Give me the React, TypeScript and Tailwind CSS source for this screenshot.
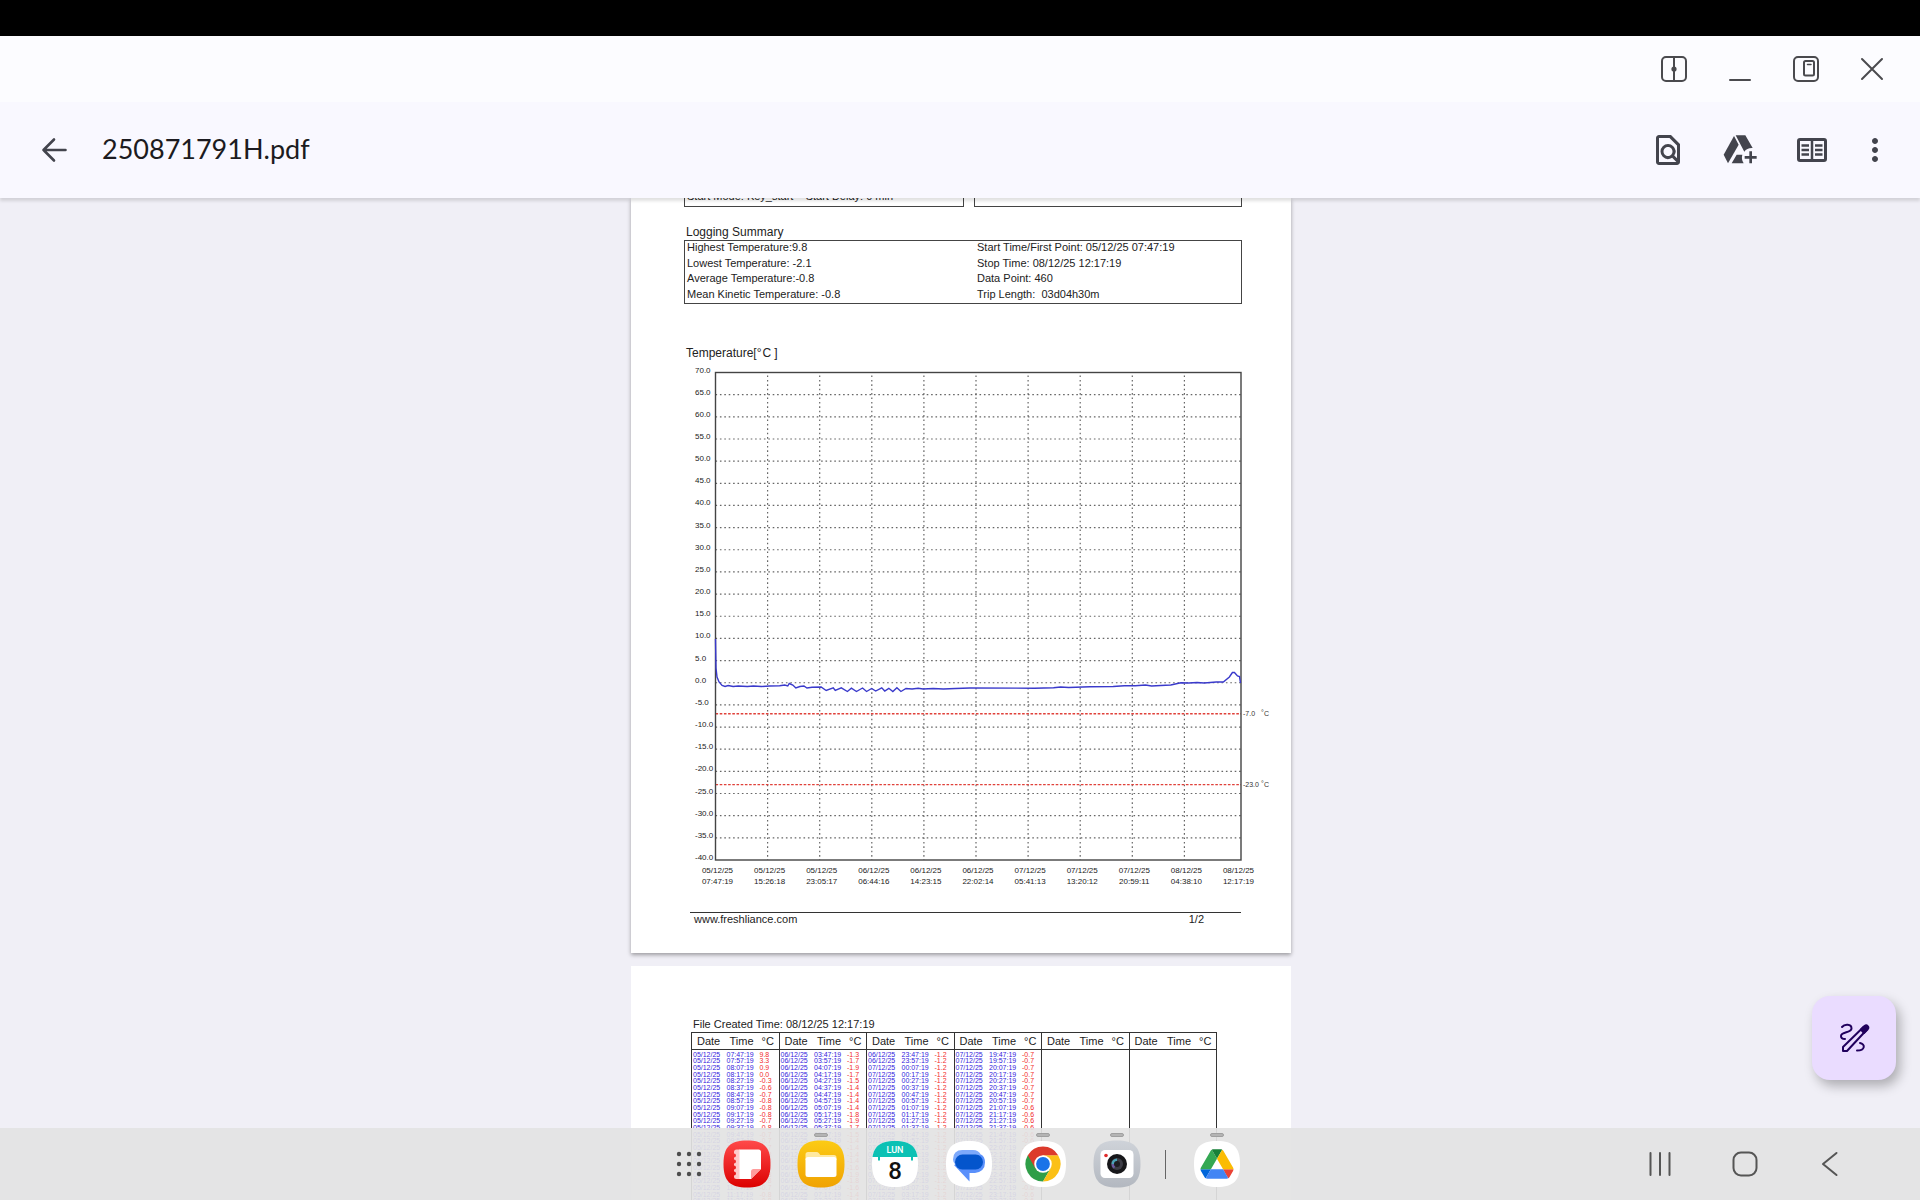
import React from "react";
import { MdOutlineFindInPage, MdMoreVert } from "react-icons/md";

/* ---------- window and app bars ---------- */

function WindowButton({ label, children }: { label: string; children: React.ReactNode }) {
  return (
    <button type="button" aria-label={label} className="flex h-full w-[66px] items-center justify-center">
      <svg width="28" height="28" viewBox="0 0 28 28" fill="none" stroke="#4a4a4e" strokeWidth="2" strokeLinecap="round">
        {children}
      </svg>
    </button>
  );
}

function WindowBar() {
  return (
    <div className="flex h-[66px] justify-end bg-[#fcfcff] pr-[15px]">
      <WindowButton label="Split window">
        <rect x="2" y="2" width="24" height="24" rx="4" />
        <path d="M14 2v24" />
        <circle cx="14" cy="14" r="2.6" fill="#4a4a4e" stroke="none" />
      </WindowButton>
      <WindowButton label="Minimize">
        <path d="M4 25h20" />
      </WindowButton>
      <WindowButton label="Pop-up view">
        <rect x="2" y="2" width="24" height="24" rx="4" />
        <rect x="12" y="6" width="10" height="14.500" rx="1.5" />
        <path d="M15.5 9.5h3.5" strokeWidth="1.5" />
      </WindowButton>
      <WindowButton label="Close">
        <path d="M4 4l20 20M24 4L4 24" />
      </WindowButton>
    </div>
  );
}

function AppBar() {
  return (
    <header className="relative z-10 flex h-24 items-center bg-[#f9f8ff] pl-9 pr-[27px] text-[#43444d] shadow-[0_3px_3px_rgba(0,0,0,0.12)]">
      <button type="button" aria-label="Back" className="size-9">
        <svg width="36" height="36" viewBox="0 0 36 36" fill="none" stroke="currentColor" strokeWidth="2.6" strokeLinecap="round" strokeLinejoin="round">
          <path d="M29.5 18H7.5M18 7.5L7.5 18L18 28.5" />
        </svg>
      </button>
      <h1 className="ml-[30px] pb-[2px] font-[Lato,sans-serif] text-[27px] leading-9 text-[#1c1b20]">250871791H.pdf</h1>
      <div className="ml-auto flex items-center">
        <button type="button" aria-label="Find in file" className="flex w-[72px] justify-center">
          <MdOutlineFindInPage size={36} />
        </button>
        <button type="button" aria-label="Add to Drive" className="flex w-[72px] justify-center">
          <svg width="36" height="36" viewBox="0 0 108 108" fill="currentColor">
            <path d="M36 12L50 38L18 94L5 68Z" />
            <path d="M41 10H70L92 48Q75 47 67 59Z" />
            <path d="M29 94L44 68H61Q57 82 65 94Z" />
            <path d="M82 58h8v14h14v8H90v14h-8V80H68v-8h14Z" />
          </svg>
        </button>
        <button type="button" aria-label="Reading view" className="flex w-[72px] justify-center">
          <svg width="36" height="36" viewBox="0 0 36 36" fill="none" stroke="currentColor">
            <rect x="4.5" y="7.5" width="27" height="21" rx="1.5" strokeWidth="3" />
            <path d="M18 7v22" strokeWidth="2.5" />
            <path d="M7.5 13.5h7.5M7.5 18h7.5M7.5 22.5h7.5M21 13.5h7.5M21 18h7.5M21 22.5h7.5" strokeWidth="2.4" />
          </svg>
        </button>
        <button type="button" aria-label="More options" className="ml-[9px] flex w-9 justify-center">
          <MdMoreVert size={36} />
        </button>
      </div>
    </header>
  );
}

/* ---------- page 1 ---------- */

const AXIS = ["05/12/25 07:47:19", "05/12/25 15:26:18", "05/12/25 23:05:17", "06/12/25 06:44:16", "06/12/25 14:23:15", "06/12/25 22:02:14", "07/12/25 05:41:13", "07/12/25 13:20:12", "07/12/25 20:59:11", "08/12/25 04:38:10", "08/12/25 12:17:19"];

const LEFT = 84.5;
const RIGHT = 610;
const TOP = 11.5;
const BOTTOM = 499;
const yOf = (t: number) => TOP + ((70 - t) * (BOTTOM - TOP)) / 110;
const xOf = (i: number) => LEFT + i * 52.1;

const CURVE =
  "84.5,278 85,307 86,316 88,321 91,324.5 94,325.5 97,324.5 102,325.5 107,325 116,325.5 122,325 130,325.5 138,325 148,324.8 153,324 156,325 157.5,322.5 161,324 164,327 168,325.5 172,325 175,327 180,326.3 189,326 194,329.5 201,326.8 203,329.5 209,326.8 215,330.5 219,327.2 224,330.5 230,327 234,330.5 239,327.5 243,330 249,326.8 252,330 256,327.3 260,330.5 264,326.8 268,330.5 273,327.5 279,328 285,327.3 290,328 300,327.5 310,328 322,327.5 336,327 400,327.2 419,326.8 426,326 434,326.5 455,325.8 478,325.5 489,324.8 500,324.8 510,324 516,325 525,324.5 535,324 545,321.8 553,322 561,321.5 568,322 580,321 587,321 593,316 596,311.5 598,311.5 601,315 603,315.5 604,322";

function Chart() {
  const temps = Array.from({ length: 23 }, (_, i) => 70 - i * 5);
  return (
    <svg width="660" height="529" viewBox="0 0 660 529" className="block font-['Liberation_Sans',Arial,sans-serif]" role="img" aria-label="Temperature chart">
      <g stroke="#666" strokeWidth="1.2" strokeDasharray="1.6 2.8">
        {temps.slice(1, -1).map((t) => (
          <path key={t} d={`M${LEFT} ${yOf(t)}H${RIGHT}`} />
        ))}
        {AXIS.slice(1, -1).map((a, i) => (
          <path key={a} d={`M${xOf(i + 1)} ${TOP + 3}V${BOTTOM}`} />
        ))}
      </g>
      <g stroke="#e0413a" strokeWidth="1.4" strokeDasharray="2.6 1.6">
        <path d={`M${LEFT} ${yOf(-7)}H${RIGHT}`} />
        <path d={`M${LEFT} ${yOf(-23)}H${RIGHT}`} />
      </g>
      <rect x={LEFT} y={TOP} width={RIGHT - LEFT} height={BOTTOM - TOP} fill="none" stroke="#444" strokeWidth="1.4" />
      <polyline points={CURVE} transform={`translate(${LEFT} 0) scale(${525 / 519.5} 1) translate(${-LEFT} 0)`} fill="none" stroke="#3a3acb" strokeWidth="1.4" />
      <g fontSize="8" fill="#222">
        {temps.map((t) => (
          <text key={t} x="64" y={yOf(t)}>
            {t.toFixed(1)}
          </text>
        ))}
      </g>
      <g fontSize="8" fill="#222" textAnchor="middle">
        {AXIS.map((a, i) => {
          const [d, h] = a.split(" ");
          return (
            <g key={a}>
              <text x={xOf(i) + 2} y="512">{d}</text>
              <text x={xOf(i) + 2} y="523">{h}</text>
            </g>
          );
        })}
      </g>
      <g fontSize="7" fill="#333">
        {[-7, -23].map((t) => (
          <g key={t}>
            <text x="612" y={yOf(t) + 2}>{t.toFixed(1)}</text>
            <text x="630" y={yOf(t) + 1}>°</text>
            <text x="633" y={yOf(t) + 2}>C</text>
          </g>
        ))}
      </g>
    </svg>
  );
}

function PageOne() {
  return (
    <section className="h-[755px] w-[660px] bg-white text-[#222] shadow-[0_2px_4px_rgba(0,0,0,0.35)]">
      <div className="ml-[53px] flex h-[9px] w-[558px] justify-between overflow-hidden text-[11px] leading-[15px]">
        <div className="flex w-[280px] items-end whitespace-pre border-x border-b border-[#444] pb-[2px] pl-[2px]">
          Start Mode: Key_start{"    "}Start Delay: 0 min
        </div>
        <div className="w-[268px] border-x border-b border-[#444]" />
      </div>
      <h2 className="ml-[55px] mt-[17px] text-[12px] leading-4">Logging Summary</h2>
      <div className="ml-[53px] grid h-16 w-[558px] grid-cols-[290px_1fr] grid-rows-4 whitespace-pre border border-[#444] pl-[2px] text-[11px] leading-[13px]">
        <p>Highest Temperature:9.8</p>
        <p>Start Time/First Point: 05/12/25 07:47:19</p>
        <p>Lowest Temperature: -2.1</p>
        <p>Stop Time: 08/12/25 12:17:19</p>
        <p>Average Temperature:-0.8</p>
        <p>Data Point: 460</p>
        <p>Mean Kinetic Temperature: -0.8</p>
        <p>Trip Length:  03d04h30m</p>
      </div>
      <h2 className="ml-[55px] mt-[41px] text-[12px] leading-4">
        Temperature[<span className="mr-px">°</span>C<span className="ml-[3px]">]</span>
      </h2>
      <Chart />
      <footer className="ml-[59px] mt-[22px] flex w-[551px] justify-between border-t border-[#333] pl-1 pr-[37px] text-[11px] leading-3">
        <span>www.freshliance.com</span>
        <span>1/2</span>
      </footer>
    </section>
  );
}

/* ---------- page 2 ---------- */

const READINGS: { start: number; temps: number[] }[] = [
  { start: 0, temps: [9.8, 3.3, 0.9, 0, -0.3, -0.6, -0.7, -0.8, -0.8, -0.8, -0.7, -0.8, -0.7, -0.7, -0.7, -0.8, -0.8, -0.8, -0.8, -0.8, -0.7, -0.8, -0.8] },
  { start: 120, temps: [-1.3, -1.7, -1.9, -1.7, -1.5, -1.4, -1.4, -1.4, -1.4, -1.8, -1.9, -1.7, -1.5, -1.4, -1.4, -1.4, -1.4, -1.6, -1.9, -1.8, -1.6, -1.4, -1.4] },
  { start: 240, temps: Array(23).fill(-1.2) },
  { start: 360, temps: [...Array(8).fill(-0.7), ...Array(15).fill(-0.6)] },
];

const pad = (n: number) => String(n).padStart(2, "0");

function stamp(index: number) {
  const minutes = 7 * 60 + 47 + index * 10;
  const day = 5 + Math.floor(minutes / 1440);
  const rest = minutes % 1440;
  return { date: `${pad(day)}/12/25`, time: `${pad(Math.floor(rest / 60))}:${pad(rest % 60)}:19` };
}

const GROUPS = [0, 1, 2, 3, 4, 5];

function PageTwo() {
  return (
    <section className="mt-[13px] h-[260px] w-[660px] bg-white pt-[50px] text-[#222]">
      <table className="ml-[60px] w-[526px] table-fixed border-collapse border border-[#333] text-left">
        <caption className="pl-[2px] text-left text-[11px] leading-4">File Created Time: 08/12/25 12:17:19</caption>
        <colgroup>
          {GROUPS.map((g) => (
            <React.Fragment key={g}>
              <col className="w-[34px]" />
              <col className="w-[33px]" />
              <col />
            </React.Fragment>
          ))}
        </colgroup>
        <thead>
          <tr className="h-[17px] border-b border-[#333] text-[11px] leading-[15px]">
            {GROUPS.map((g) => (
              <React.Fragment key={g}>
                <th className="p-0 pl-[5px] font-normal">Date</th>
                <th className="p-0 pl-1 font-normal">Time</th>
                <th className="border-r border-[#333] p-0 pl-[3px] font-normal">°C</th>
              </React.Fragment>
            ))}
          </tr>
        </thead>
        <tbody className="text-[7px] leading-[6px]">
          <tr className="h-[2px]" aria-hidden="true">
            {GROUPS.map((g) => (
              <td key={g} colSpan={3} className="border-r border-[#333] p-0" />
            ))}
          </tr>
          {READINGS[0].temps.map((_, r) => (
            <tr key={r} className={r % 3 === 0 ? "h-[6px]" : "h-[7px]"}>
              {GROUPS.map((g) => {
                const group = READINGS[g];
                const s = group ? stamp(group.start + r) : null;
                return (
                  <React.Fragment key={g}>
                    <td className="p-0 pl-px text-[#3322dd]">{s?.date}</td>
                    <td className="p-0 pl-px text-[#3322dd]">{s?.time}</td>
                    <td className="border-r border-[#333] p-0 pl-px text-[#f22a2a]">{group?.temps[r].toFixed(1)}</td>
                  </React.Fragment>
                );
              })}
            </tr>
          ))}
        </tbody>
      </table>
    </section>
  );
}

/* ---------- taskbar ---------- */

const TILE = "M24 .5C41 .5 47.5 7 47.5 24S41 47.5 24 47.5.5 41 .5 24 7 .5 24 .5Z";
const WHITE_TILE = "M24 1C40.500 1 47 7.500 47 24S40.500 47 24 47 1 40.500 1 24 7.500 1 24 1Z";

function DockButton({ label, running, children }: { label: string; running?: boolean; children: React.ReactNode }) {
  return (
    <button type="button" aria-label={label} className="flex w-[74px] flex-col items-center pt-[5px]">
      <span className={running ? "h-1 w-[14px] rounded-full border border-[#a0a0a0] bg-[#b4b4b4]" : "h-1 w-[14px]"} />
      <svg width="48" height="48" viewBox="0 0 48 48" className="mt-[3px]">
        {children}
      </svg>
    </button>
  );
}

function NotesIcon() {
  return (
    <>
      <defs>
        <linearGradient id="notes" x1="0" y1="0" x2="0" y2="1">
          <stop offset="0" stopColor="#ff4a4a" />
          <stop offset="1" stopColor="#dc0000" />
        </linearGradient>
      </defs>
      <path d={TILE} fill="url(#notes)" />
      <path d="M17 9.500h-3.500q-2.500 0-2.500 2.500v1.500a2 2 0 0 1 0 4v2a2 2 0 0 1 0 4v2a2 2 0 0 1 0 4v2a2 2 0 0 1 0 4v1q0 2.500 2.500 2.500H17Z" fill="#ffc9c9" />
      <path d="M16.500 9.500h19q2.500 0 2.500 2.500v17l-10 10h-11.500Z" fill="#fff" />
      <path d="M38 29h-7.500q-2.500 0-2.500 2.500V39Z" fill="#ff9c9c" />
    </>
  );
}

function FilesIcon() {
  return (
    <>
      <defs>
        <linearGradient id="files" x1="0" y1="0" x2="0" y2="1">
          <stop offset="0" stopColor="#fccb14" />
          <stop offset="1" stopColor="#f0a202" />
        </linearGradient>
      </defs>
      <path d={TILE} fill="url(#files)" />
      <path d="M8.500 20v-5.500q0-2.500 2.500-2.500h8.500q1.500 0 2.500 1.200l1.300 1.800H37q2.500 0 2.500 2.500V20Z" fill="#ffe9a0" />
      <rect x="8.500" y="17" width="31" height="20" rx="2.500" fill="#fff" />
    </>
  );
}

function CalendarIcon() {
  return (
    <>
      <defs>
        <clipPath id="calendar">
          <path d={WHITE_TILE} />
        </clipPath>
      </defs>
      <path d={WHITE_TILE} fill="#fff" />
      <path d="M0 0h48v17H42v3.500h-2V17H9v3.500H7V17H0Z" fill="#0cc1b4" clipPath="url(#calendar)" />
      <text x="24" y="13" textAnchor="middle" fontSize="9" fill="#fff" className="font-[Roboto,sans-serif] font-medium">LUN</text>
      <text x="24" y="39" textAnchor="middle" fontSize="24" fill="#111" className="font-[Roboto,sans-serif] font-medium">8</text>
    </>
  );
}

function MessagesIcon() {
  return (
    <>
      <path d={WHITE_TILE} fill="#fff" />
      <path d="M17.500 10H28a9 9 0 0 1 8 5L30 28H17Q8 25 8 19.500 8 10 17.500 10Z" fill="#7da9fb" />
      <path d="M36 14.500q4 2 4 8 0 9-10 10.500H24.500V41.500L9 25Z" fill="#5a90fb" />
      <rect x="10" y="14.500" width="28" height="15" rx="7.500" fill="#0455cc" />
    </>
  );
}

function ChromeIcon() {
  return (
    <>
      <path d={WHITE_TILE} fill="#fff" />
      <path d="M24 24L8.840 15.250A17.500 17.500 0 0 0 24 41.500L31.580 28.380Z" fill="#2f9e48" />
      <path d="M24 24L31.580 28.380L24 41.500A17.500 17.500 0 0 0 39.160 15.250H24Z" fill="#fbc016" />
      <path d="M24 15.250H39.160A17.500 17.500 0 0 0 8.840 15.250L16.420 28.380Z" fill="#dc3a2c" />
      <circle cx="24" cy="24" r="8.750" fill="#fff" />
      <circle cx="24" cy="24" r="6.900" fill="#1a73e8" />
    </>
  );
}

function CameraIcon() {
  return (
    <>
      <defs>
        <linearGradient id="camera" x1="0" y1="0" x2="0" y2="1">
          <stop offset="0" stopColor="#cfd3d9" />
          <stop offset="1" stopColor="#b3b8c0" />
        </linearGradient>
      </defs>
      <path d={TILE} fill="url(#camera)" />
      <rect x="7.500" y="10" width="33" height="28" rx="4.500" fill="#fff" />
      <circle cx="13" cy="15.500" r="1.800" fill="#e02b2b" />
      <circle cx="24" cy="24" r="10" fill="#17171a" />
      <circle cx="24" cy="24" r="6" fill="#3d3d46" />
      <path d="M18.500 24a5.500 5.500 0 0 1 5.500-5.500v3a2.500 2.500 0 0 0-2.500 2.500Z" fill="#4aa3b8" />
      <path d="M18.500 24a5.500 5.500 0 0 0 2.500 4.600l1.500-2.500a2.500 2.500 0 0 1-1-2.100Z" fill="#6a5aa0" />
      <circle cx="24" cy="24" r="3" fill="#1e1e22" />
    </>
  );
}

function DriveIcon() {
  return (
    <>
      <path d={WHITE_TILE} fill="#fff" />
      <g transform="translate(7.500 9.200) scale(.378)">
        <path d="M6.600 66.850l3.850 6.650c.8 1.400 1.950 2.500 3.300 3.300L27.500 53H0c0 1.550.4 3.100 1.200 4.500z" fill="#0066da" />
        <path d="M43.650 25L29.900 1.200c-1.350.8-2.500 1.900-3.300 3.300L1.200 48.500A9.060 9.060 0 0 0 0 53h27.500z" fill="#34a853" />
        <path d="M73.550 76.800c1.350-.8 2.500-1.900 3.300-3.300l1.600-2.750L86.100 57.500c.8-1.400 1.200-2.950 1.200-4.500H59.800l5.850 11.500z" fill="#ea4335" />
        <path d="M43.650 25L57.400 1.200C56.050.4 54.500 0 52.900 0H34.400c-1.600 0-3.150.45-4.500 1.200z" fill="#188038" />
        <path d="M59.800 53H27.500L13.750 76.800c1.350.8 2.900 1.200 4.500 1.200h50.800c1.600 0 3.150-.45 4.500-1.200z" fill="#4285f4" />
        <path d="M73.400 26.500l-12.700-22c-.8-1.400-1.950-2.500-3.300-3.300L43.650 25l16.150 28h27.450c0-1.550-.4-3.100-1.200-4.500z" fill="#fbbc04" />
      </g>
    </>
  );
}

function NavButton({ label, children }: { label: string; children: React.ReactNode }) {
  return (
    <button type="button" aria-label={label} className="flex w-[85px] items-center justify-center">
      <svg width="28" height="28" viewBox="0 0 28 28" fill="none" stroke="#555" strokeWidth="2" strokeLinecap="round" strokeLinejoin="round">
        {children}
      </svg>
    </button>
  );
}

function Taskbar() {
  return (
    <nav className="absolute inset-x-0 bottom-0 z-20 grid h-[72px] grid-cols-[1fr_auto_1fr] bg-[#e3e3e3]/92">
      <div />
      <div className="flex">
        <button type="button" aria-label="All apps" className="flex w-11 items-center justify-end pr-[8px]">
          <svg width="26" height="26" viewBox="0 0 26 26" fill="#4d4d4d">
            {[3, 13, 23].map((y) => [3, 13, 23].map((x) => <circle key={`${x}-${y}`} cx={x} cy={y} r="2.2" />))}
          </svg>
        </button>
        <DockButton label="Notes"><NotesIcon /></DockButton>
        <DockButton label="Files" running><FilesIcon /></DockButton>
        <DockButton label="Calendar"><CalendarIcon /></DockButton>
        <DockButton label="Messages"><MessagesIcon /></DockButton>
        <DockButton label="Chrome" running><ChromeIcon /></DockButton>
        <DockButton label="Camera" running><CameraIcon /></DockButton>
        <div className="flex w-[26px] items-center pl-[11px]">
          <span className="h-[29px] w-px bg-[#666]" />
        </div>
        <DockButton label="Drive" running><DriveIcon /></DockButton>
      </div>
      <div className="flex justify-end pr-12">
        <NavButton label="Recent apps">
          <path d="M4.500 3v22M14 3v22M23.500 3v22" />
        </NavButton>
        <NavButton label="Home">
          <rect x="2.500" y="2.500" width="23" height="23" rx="7.500" />
        </NavButton>
        <NavButton label="Back">
          <path d="M20.500 3L7 14l13.500 11" />
        </NavButton>
      </div>
    </nav>
  );
}

export default function App() {
  return (
    <div className="relative flex h-screen flex-col overflow-hidden bg-[#f0eff6] font-['Liberation_Sans',Arial,sans-serif]">
      <div className="h-9 shrink-0 bg-black" />
      <div className="shrink-0">
        <WindowBar />
        <AppBar />
      </div>
      <main className="flex min-h-0 flex-1 flex-col items-center overflow-hidden pl-[2px] *:shrink-0">
        <PageOne />
        <PageTwo />
      </main>
      <button
        type="button"
        aria-label="Annotate"
        className="absolute bottom-[120px] right-6 z-20 flex size-[84px] items-center justify-center rounded-[18px] bg-[#eadcff] shadow-[4px_6px_12px_rgba(0,0,0,0.28)]"
      >
        <svg width="36" height="36" viewBox="0 0 36 36" fill="none" stroke="#21005d" strokeWidth="2" strokeLinecap="round" strokeLinejoin="round">
          <path d="M6 7C8.500 4 15.500 3.800 15.500 8.500C15.500 13 5 11.500 5 16C5 18 6.500 19 9 19" />
          <path d="M7 31V27L27.500 7L30.500 10L11 31Z" />
          <path d="M25 9.500L28.500 6Q30.300 4.700 31.700 6.100T31.500 9.500L28 13Z" fill="#21005d" />
          <path d="M24 23C29.500 24 29.500 30.500 21 30.500" />
        </svg>
      </button>
      <Taskbar />
    </div>
  );
}
